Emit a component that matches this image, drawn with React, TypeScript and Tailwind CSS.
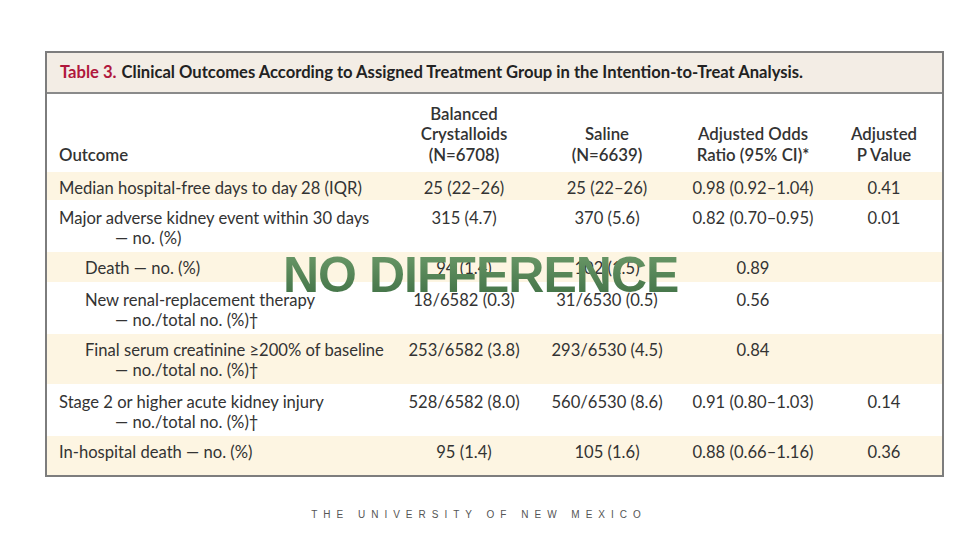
import React from "react";

type Row = {
  label: string;
  cont?: string;
  sub?: boolean;
  bal: string;
  sal: string;
  odds: string;
  p: string;
  h: string;
  tint: boolean;
};

const rows: Row[] = [
  { label: "Median hospital-free days to day 28 (IQR)", bal: "25 (22–26)", sal: "25 (22–26)", odds: "0.98 (0.92–1.04)", p: "0.41", h: "h-[28px]", tint: true },
  { label: "Major adverse kidney event within 30 days", cont: "— no. (%)", bal: "315 (4.7)", sal: "370 (5.6)", odds: "0.82 (0.70–0.95)", p: "0.01", h: "h-[48px]", tint: false },
  { label: "Death — no. (%)", sub: true, bal: "94 (1.4)", sal: "102 (1.5)", odds: "0.89", p: "", h: "h-[30px]", tint: true },
  { label: "New renal-replacement therapy", cont: "— no./total no. (%)†", sub: true, bal: "18/6582 (0.3)", sal: "31/6530 (0.5)", odds: "0.56", p: "", h: "h-[48px]", tint: false },
  { label: "Final serum creatinine ≥200% of baseline", cont: "— no./total no. (%)†", sub: true, bal: "253/6582 (3.8)", sal: "293/6530 (4.5)", odds: "0.84", p: "", h: "h-[50px]", tint: true },
  { label: "Stage 2 or higher acute kidney injury", cont: "— no./total no. (%)†", bal: "528/6582 (8.0)", sal: "560/6530 (8.6)", odds: "0.91 (0.80–1.03)", p: "0.14", h: "h-[48px]", tint: false },
  { label: "In-hospital death — no. (%)", bal: "95 (1.4)", sal: "105 (1.6)", odds: "0.88 (0.66–1.16)", p: "0.36", h: "h-[39px]", tint: true },
];

const cols = "grid grid-cols-[347px_140px_146px_146px_1fr]";

export default function App() {
  return (
    <div className="relative w-[960px] h-[540px] bg-white overflow-hidden font-['Lato','Liberation_Sans',sans-serif] text-[#333]">
      <div className="pt-[51px] pl-[45px]">
        <div className="w-[899px] border-2 border-[#7d7d7d] bg-white">
          <div className="h-[41px] bg-[#f3ede5] border-b-2 border-[#8a8a8a] flex items-center pl-[13px] text-[16.6px] font-bold text-[#222]">
            <span className="text-[#b0183c]">Table 3.</span>
            <span className="ml-[5px]">Clinical Outcomes According to Assigned Treatment Group in the Intention-to-Treat Analysis.</span>
          </div>
          <div className={`${cols} h-[78px] items-end pb-[7px] text-[16.8px] leading-[20.5px] font-semibold`}>
            <div className="pl-[12px]">Outcome</div>
            <div className="text-center">Balanced<br />Crystalloids<br />(N=6708)</div>
            <div className="text-center">Saline<br />(N=6639)</div>
            <div className="text-center">Adjusted Odds<br />Ratio (95% CI)*</div>
            <div className="text-center">Adjusted<br />P Value</div>
          </div>
          <div className="flex flex-col gap-[2px] text-[16.6px] leading-[20px]">
            {rows.map((r, i) => (
              <div key={i} className={`${cols} ${r.h} pt-[6px] ${r.tint ? "bg-[#fdf5e2]" : "bg-white"}`}>
                <div className={r.sub ? "pl-[38px]" : "pl-[12px]"}>
                  <div>{r.label}</div>
                  {r.cont && <div className={r.sub ? "pl-[30px]" : "pl-[56px]"}>{r.cont}</div>}
                </div>
                <div className="text-center">{r.bal}</div>
                <div className="text-center">{r.sal}</div>
                <div className="text-center">{r.odds}</div>
                <div className="text-center">{r.p}</div>
              </div>
            ))}
          </div>
        </div>
        <div className="mt-[30px] w-[868px] text-center text-[10px] tracking-[0.6em] text-[#555] font-['Liberation_Sans',sans-serif]">
          THE UNIVERSITY OF NEW MEXICO
        </div>
      </div>
      <div className="absolute left-[283px] top-[247px] text-[50px] leading-[56px] font-bold tracking-[-1px] font-['Liberation_Sans',sans-serif] text-transparent bg-clip-text bg-gradient-to-b from-[#6f9d6c] to-[#3d6e43]">
        NO DIFFERENCE
      </div>
    </div>
  );
}
